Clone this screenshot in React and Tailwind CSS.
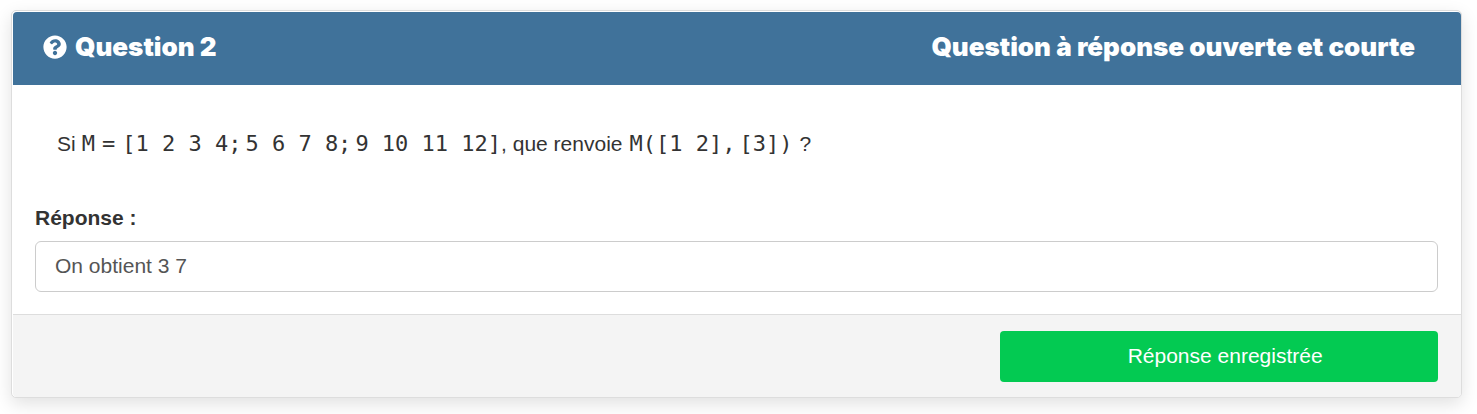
import { FaQuestionCircle } from "react-icons/fa";

function Code({ children }) {
  return (
    <code className="whitespace-pre font-['DejaVu_Sans_Mono',monospace] text-[22px] leading-6 font-normal">
      {children}
    </code>
  );
}

export default function App() {
  return (
    <main className="bg-white px-[11px] pt-2.5 pb-4 font-['Liberation_Sans',Arial,sans-serif] text-[#333]">
      <form
        className="mr-1 rounded-[5px] border border-[#ddd] bg-white pt-px pl-px shadow-[0_6px_18px_rgba(0,0,0,0.12)]"
        onSubmit={(event) => event.preventDefault()}
      >
        <header className="flex items-center justify-between rounded-t bg-[#40729a] pt-[18px] pr-[46px] pb-[22px] pl-[30px] font-['Arial_Black','Inter',sans-serif] text-[26px] leading-[33px] font-black text-white">
          <h2 className="flex items-center gap-2">
            <FaQuestionCircle className="size-6" aria-hidden="true" />
            Question 2
          </h2>
          <p>Question à réponse ouverte et courte</p>
        </header>

        <div className="pt-[43px] pr-[23px] pb-[22px] pl-[22px] text-[21px] leading-8">
          <p className="flex flex-wrap items-baseline px-[22px]">
            <span className="mr-1.5">Si</span>
            <span className="flex flex-wrap items-baseline">
              <Code>M</Code>
              <span className="mx-[7px]"><Code>=</Code></span>
              <Code>[1 2 3 4;</Code>
              <span className="ml-1"><Code>5 6 7 8;</Code></span>
              <span className="ml-1"><Code>9 10 11 12]</Code></span>
            </span>
            <span className="mr-[7px]">, que renvoie</span>
            <Code>M([1 2],</Code>
            <span className="mr-[7px] ml-1"><Code>[3])</Code></span>
            <span>?</span>
          </p>

          <label htmlFor="answer" className="mt-[42px] block font-bold">
            Réponse :
          </label>
          <input
            id="answer"
            type="text"
            defaultValue="On obtient 3 7"
            className="mt-[7px] block h-[51px] w-full rounded-md border border-[#ccc] bg-white px-[19px] pb-0.5 text-[#555]"
          />
        </div>

        <footer className="flex justify-end rounded-b border-t border-[#ddd] bg-[#f4f4f4] pt-4 pr-[23px] pb-[15px] pl-[22px]">
          <button
            type="submit"
            className="h-[51px] w-[31.2%] rounded bg-[#03ca52] pb-0.5 pl-3 text-[21px] text-white"
          >
            Réponse enregistrée
          </button>
        </footer>
      </form>
    </main>
  );
}
